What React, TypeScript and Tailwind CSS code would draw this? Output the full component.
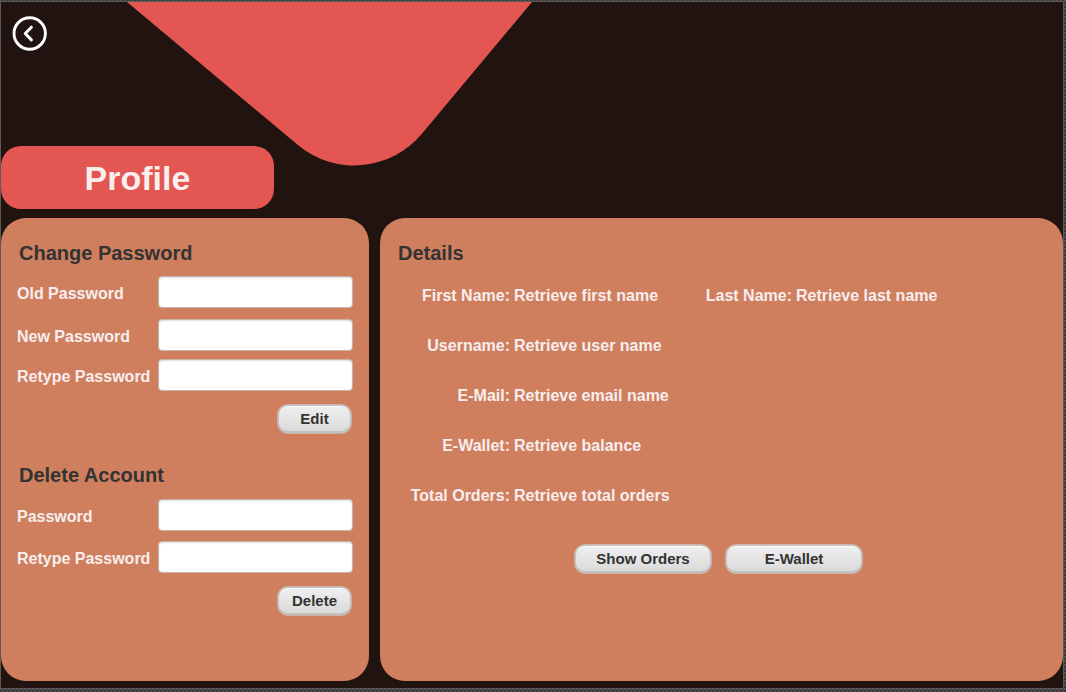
import type { ReactNode } from "react";

type FieldProps = { id: string; label: string; className?: string };

function PasswordField({ id, label, className = "" }: FieldProps) {
  return (
    <div className={`flex items-center ${className}`}>
      <label htmlFor={id} className="w-[141px] shrink-0 whitespace-nowrap pt-1 text-[#f8eeee]">
        {label}
      </label>
      <input
        id={id}
        type="password"
        className="h-8 w-full min-w-0 rounded-[4px] border border-[#c5b3a9] bg-white px-2 text-[#333333] shadow-[inset_0_1px_2px_#dedede] outline-none focus:border-[#039ed3]"
      />
    </div>
  );
}

function ActionButton({ children, className }: { children: ReactNode; className: string }) {
  return (
    <button
      type="button"
      className={`h-[30px] rounded-[11px] border border-[#c9b4aa] bg-linear-to-b from-[#f0f0f0] to-[#d9d9d9] text-[15px] leading-5 font-bold text-[#333333] shadow-[inset_0_1px_0_#c4c4c4,inset_0_-2px_0_#c2c0bf,inset_1px_0_0_#bfbfbf,inset_-1px_0_0_#bfbfbf,inset_0_2px_1px_#fafafa] ${className}`}
    >
      {children}
    </button>
  );
}

function Detail({ label, value, labelClass }: { label: string; value: string; labelClass: string }) {
  return (
    <div className="flex gap-1 whitespace-nowrap">
      <dt className={`text-right ${labelClass}`}>{label}</dt>
      <dd>{value}</dd>
    </div>
  );
}

export default function App() {
  return (
    <div className="flex min-h-screen flex-col bg-[#404040] bg-[repeating-conic-gradient(#383838_0_25%,#505050_0_50%)] bg-size-[4px_4px] pt-px pr-[2px] pb-[3px] font-['Liberation_Sans',Arial,sans-serif] text-base leading-5 font-bold">
      <main className="relative flex flex-1 flex-col border border-[#5c5a59] bg-[#201310]">
        <svg
          className="pointer-events-none absolute top-0 left-0"
          width="540"
          height="168"
          viewBox="1 2 540 168"
          aria-hidden="true"
        >
          <path d="M127 2 L297.9 145 A88 88 0 0 0 421.7 133.9 L532 2 Z" fill="#e45652" />
        </svg>

        <header className="relative flex h-[216px] flex-col items-start justify-between pt-[13px] pb-[9px]">
          <button type="button" aria-label="Back" className="ml-[10px]">
            <svg className="block" width="37" height="37" viewBox="0 0 37 37" fill="none" stroke="#ffffff">
              <circle cx="18.7" cy="18.5" r="15.7" strokeWidth="2.9" />
              <path d="M20.4 12.2 L14.2 18.5 L20.4 24.9" strokeWidth="3" strokeLinecap="round" strokeLinejoin="round" />
            </svg>
          </button>
          <h1 className="flex h-[63px] w-[273px] items-center justify-center rounded-[20px] bg-[#e45652] text-[34px] leading-10 text-[#f8eeee]">
            Profile
          </h1>
        </header>

        <div className="flex flex-1 gap-[11px] pb-[7px]">
          <section className="w-[368px] shrink-0 rounded-[25px] bg-[#cf7f5e] px-4 pt-[25px] pb-10">
            <form>
              <h2 className="mb-[13px] pl-0.5 text-xl leading-5 text-[#333333]">Change Password</h2>
              <PasswordField id="old-password" label="Old Password" className="mb-[11px]" />
              <PasswordField id="new-password" label="New Password" className="mb-2" />
              <PasswordField id="retype-new-password" label="Retype Password" />
              <div className="mt-[13px] flex justify-end pr-px">
                <ActionButton className="w-[75px]">Edit</ActionButton>
              </div>
            </form>
            <form className="mt-[31px]">
              <h2 className="mb-[14px] pl-0.5 text-xl leading-5 text-[#333333]">Delete Account</h2>
              <PasswordField id="password" label="Password" className="mb-[10px]" />
              <PasswordField id="retype-password" label="Retype Password" />
              <div className="mt-[13px] flex justify-end pr-px">
                <ActionButton className="w-[75px]">Delete</ActionButton>
              </div>
            </form>
          </section>

          <section className="min-w-0 flex-1 rounded-[25px] bg-[#cf7f5e] px-[18px] pt-[25px]">
            <h2 className="mb-[23px] text-xl leading-5 text-[#333333]">Details</h2>
            <dl className="flex flex-col gap-[30px] text-[#f8eeee]">
              <div className="flex">
                <div className="w-[306px]">
                  <Detail label="First Name:" value="Retrieve first name" labelClass="w-28" />
                </div>
                <Detail label="Last Name:" value="Retrieve last name" labelClass="w-[88px]" />
              </div>
              <Detail label="Username:" value="Retrieve user name" labelClass="w-28" />
              <Detail label="E-Mail:" value="Retrieve email name" labelClass="w-28" />
              <Detail label="E-Wallet:" value="Retrieve balance" labelClass="w-28" />
              <Detail label="Total Orders:" value="Retrieve total orders" labelClass="w-28" />
            </dl>
            <div className="mt-[38px] flex justify-center gap-[13px] pr-1.5">
              <ActionButton className="w-[138px]">Show Orders</ActionButton>
              <ActionButton className="w-[138px]">E-Wallet</ActionButton>
            </div>
          </section>
        </div>
      </main>
    </div>
  );
}
